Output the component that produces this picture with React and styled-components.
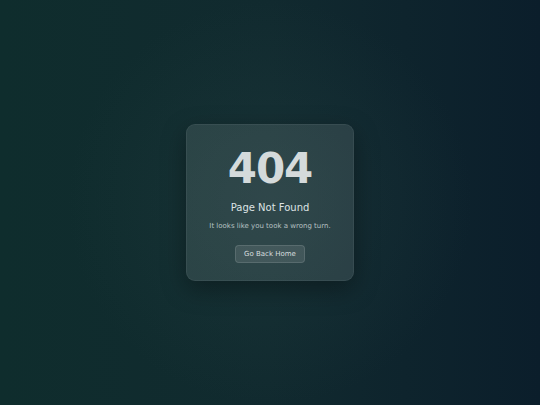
import React from 'react';
import styled, { createGlobalStyle } from 'styled-components';

const GlobalStyle = createGlobalStyle`
  html, body, #root {
    margin: 0;
    height: 100%;
  }
  body {
    font-family: "DejaVu Sans", Verdana, sans-serif;
  }
`;

const Page = styled.main`
  min-height: 100vh;
  display: flex;
  align-items: center;
  justify-content: center;
  background:
    radial-gradient(circle at 50% 50%, rgba(40, 70, 70, 0.32) 0%, rgba(40, 70, 70, 0) 60%),
    linear-gradient(90deg, #0f2d2d 0%, #112a2f 50%, #0b1e2b 100%);
`;

const Card = styled.section`
  width: 168px;
  box-sizing: border-box;
  padding: 23px 12px 17px;
  border-radius: 9px;
  background: rgba(255, 255, 255, 0.1);
  border: 1px solid rgba(255, 255, 255, 0.06);
  box-shadow: 0 8px 24px rgba(0, 0, 0, 0.35);
  display: flex;
  flex-direction: column;
  align-items: center;
  text-align: center;
`;

const Code = styled.h1`
  margin: 0;
  font-size: 42px;
  font-weight: 700;
  line-height: 1;
  color: #d4dadb;
  letter-spacing: -1px;
`;

const Title = styled.h2`
  margin: 12px 0 0;
  font-size: 10px;
  font-weight: 400;
  color: #dde3e4;
`;

const Message = styled.p`
  margin: 9px 0 0;
  font-size: 7px;
  color: #b5c0c2;
`;

const HomeButton = styled.button`
  margin-top: 15px;
  height: 18px;
  padding: 0 8px;
  border-radius: 4px;
  border: 1px solid rgba(255, 255, 255, 0.12);
  background: rgba(255, 255, 255, 0.1);
  color: #d6dddf;
  font-family: inherit;
  font-size: 7px;
  cursor: pointer;
`;

function App() {
  return (
    <>
      <GlobalStyle />
      <Page>
        <Card>
          <Code>404</Code>
          <Title>Page Not Found</Title>
          <Message>It looks like you took a wrong turn.</Message>
          <HomeButton type='button'>Go Back Home</HomeButton>
        </Card>
      </Page>
    </>
  );
}

export default App;
